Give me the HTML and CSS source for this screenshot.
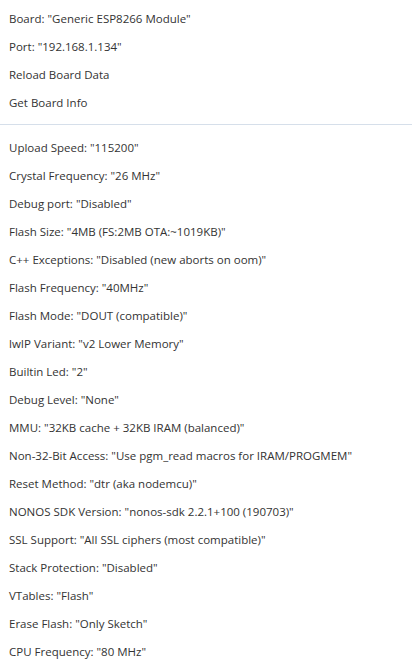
FILE: index.html
```html
<!DOCTYPE html>
<html>
<head>
<meta charset="utf-8">
<link rel="stylesheet" href="styles.css">
</head>
<body>
<div class="menu">
  <div class="item">Board: "Generic ESP8266 Module"</div>
  <div class="item">Port: "192.168.1.134"</div>
  <div class="item">Reload Board Data</div>
  <div class="item">Get Board Info</div>
  <div class="sep"></div>
  <div class="item">Upload Speed: "115200"</div>
  <div class="item">Crystal Frequency: "26 MHz"</div>
  <div class="item">Debug port: "Disabled"</div>
  <div class="item">Flash Size: "4MB (FS:2MB OTA:~1019KB)"</div>
  <div class="item">C++ Exceptions: "Disabled (new aborts on oom)"</div>
  <div class="item">Flash Frequency: "40MHz"</div>
  <div class="item">Flash Mode: "DOUT (compatible)"</div>
  <div class="item">lwIP Variant: "v2 Lower Memory"</div>
  <div class="item">Builtin Led: "2"</div>
  <div class="item">Debug Level: "None"</div>
  <div class="item">MMU: "32KB cache + 32KB IRAM (balanced)"</div>
  <div class="item">Non-32-Bit Access: "Use pgm_read macros for IRAM/PROGMEM"</div>
  <div class="item">Reset Method: "dtr (aka nodemcu)"</div>
  <div class="item">NONOS SDK Version: "nonos-sdk 2.2.1+100 (190703)"</div>
  <div class="item">SSL Support: "All SSL ciphers (most compatible)"</div>
  <div class="item">Stack Protection: "Disabled"</div>
  <div class="item">VTables: "Flash"</div>
  <div class="item">Erase Flash: "Only Sketch"</div>
  <div class="item">CPU Frequency: "80 MHz"</div>
</div>
</body>
</html>
```
FILE: styles.css
```css
html, body {
  margin: 0;
  padding: 0;
  background: #ffffff;
}
.menu {
  padding-top: 5px;
  font-family: "Open Sans", "Noto Sans", sans-serif;
  font-size: 11.5px;
  color: #333333;
}
.item {
  height: 28px;
  line-height: 28px;
  padding-left: 9px;
  white-space: nowrap;
}
.sep {
  height: 1px;
  margin: 7px 0 9px;
  background: #d6dfea;
}
```
